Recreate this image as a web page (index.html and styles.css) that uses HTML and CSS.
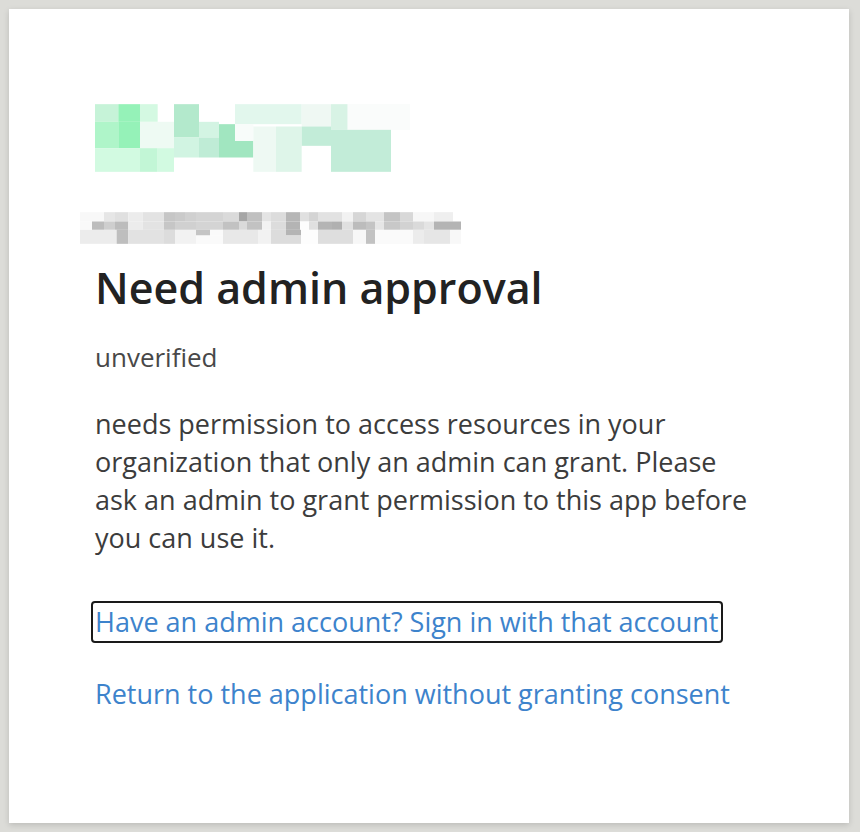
FILE: index.html
```html
<!DOCTYPE html>
<html lang="en">
<head>
    <meta charset="UTF-8">
    <meta name="viewport" content="width=device-width, initial-scale=1.0">
    <title>Need admin approval</title>
    <link rel="stylesheet" href="styles.css">
</head>
<body>
    <div class="card">
        <!-- Blurred app logo -->
        <svg class="app-logo" width="315" height="68" viewBox="75 45 945 203">
            <rect x="75" y="45" width="70" height="53" fill="#c6f3d8"/>
            <rect x="145" y="45" width="65" height="53" fill="#95f2b8"/>
            <rect x="210" y="45" width="53" height="53" fill="#d4f9e2"/>
            <rect x="75" y="98" width="70" height="79" fill="#aff5c9"/>
            <rect x="145" y="98" width="65" height="79" fill="#95f2b8"/>
            <rect x="210" y="98" width="102" height="79" fill="#eefaf3"/>
            <rect x="75" y="177" width="135" height="71" fill="#d2fae1"/>
            <rect x="210" y="177" width="53" height="71" fill="#c2f6d6"/>
            <rect x="263" y="177" width="49" height="71" fill="#d2fae1"/>
            <rect x="312" y="45" width="75" height="100" fill="#b3e9cc"/>
            <rect x="387" y="98" width="60" height="47" fill="#d3f4e3"/>
            <rect x="312" y="145" width="75" height="60" fill="#d1f4e2"/>
            <rect x="387" y="145" width="60" height="60" fill="#bfecd6"/>
            <rect x="447" y="105" width="48" height="100" fill="#a1e6c0"/>
            <rect x="495" y="155" width="55" height="50" fill="#a1e6c0"/>
            <rect x="495" y="45" width="200" height="60" fill="#e2f7ed"/>
            <rect x="495" y="105" width="55" height="50" fill="#f8fcfa"/>
            <rect x="550" y="112" width="68" height="136" fill="#eef9f3"/>
            <rect x="618" y="112" width="77" height="136" fill="#def5e9"/>
            <rect x="695" y="45" width="88" height="67" fill="#eff8f3"/>
            <rect x="695" y="112" width="88" height="58" fill="#c2ecd8"/>
            <rect x="783" y="45" width="50" height="77" fill="#d8f3e5"/>
            <rect x="833" y="45" width="187" height="77" fill="#fafcfb"/>
            <rect x="783" y="122" width="180" height="126" fill="#c2ecd8"/>
        </svg>

        <!-- Blurred publisher / tenant line -->
        <svg class="tenant" width="381" height="32" viewBox="30 370 1143 95">
            <g>
                <rect x="30" y="370" width="72" height="28" fill="#f8f8f8"/>
                <rect x="102" y="370" width="33" height="28" fill="#e6e6e6"/>
                <rect x="135" y="370" width="40" height="28" fill="#e0e0e0"/>
                <rect x="175" y="370" width="43" height="28" fill="#ececec"/>
                <rect x="218" y="370" width="64" height="28" fill="#e3e3e3"/>
                <rect x="282" y="370" width="33" height="28" fill="#c6c6c6"/>
                <rect x="315" y="370" width="30" height="28" fill="#cacaca"/>
                <rect x="345" y="370" width="33" height="28" fill="#d0d0d0"/>
                <rect x="378" y="370" width="81" height="28" fill="#d4d4d4"/>
                <rect x="459" y="370" width="48" height="28" fill="#dadada"/>
                <rect x="507" y="370" width="24" height="28" fill="#a6a6a6"/>
                <rect x="531" y="370" width="45" height="28" fill="#c0c0c0"/>
                <rect x="576" y="370" width="27" height="28" fill="#e4e4e4"/>
                <rect x="603" y="370" width="45" height="28" fill="#dcdcdc"/>
                <rect x="648" y="370" width="42" height="28" fill="#b6b6b6"/>
                <rect x="690" y="370" width="27" height="28" fill="#e0e0e0"/>
                <rect x="717" y="370" width="27" height="28" fill="#d4d4d4"/>
                <rect x="744" y="370" width="72" height="28" fill="#e2e2e2"/>
                <rect x="816" y="370" width="33" height="28" fill="#f2f2f2"/>
                <rect x="849" y="370" width="39" height="28" fill="#d6d6d6"/>
                <rect x="888" y="370" width="54" height="28" fill="#e4e4e4"/>
                <rect x="942" y="370" width="48" height="28" fill="#c4c4c4"/>
                <rect x="990" y="370" width="39" height="28" fill="#d8d8d8"/>
                <rect x="1029" y="370" width="63" height="28" fill="#f7f7f7"/>
                <rect x="1092" y="370" width="57" height="28" fill="#efefef"/>
            </g>
            <g>
                <rect x="30" y="398" width="36" height="25" fill="#f9f9f9"/>
                <rect x="66" y="398" width="36" height="25" fill="#bcbcbc"/>
                <rect x="102" y="398" width="33" height="25" fill="#cecece"/>
                <rect x="135" y="398" width="40" height="25" fill="#bcbcbc"/>
                <rect x="175" y="398" width="43" height="25" fill="#ececec"/>
                <rect x="218" y="398" width="64" height="25" fill="#e3e3e3"/>
                <rect x="282" y="398" width="33" height="25" fill="#c6c6c6"/>
                <rect x="315" y="398" width="63" height="25" fill="#d0d0d0"/>
                <rect x="378" y="398" width="81" height="25" fill="#d4d4d4"/>
                <rect x="459" y="398" width="48" height="25" fill="#c2c2c2"/>
                <rect x="507" y="398" width="24" height="25" fill="#dadada"/>
                <rect x="531" y="398" width="45" height="25" fill="#c2c2c2"/>
                <rect x="576" y="398" width="27" height="25" fill="#f2f2f2"/>
                <rect x="603" y="398" width="45" height="25" fill="#dcdcdc"/>
                <rect x="648" y="398" width="42" height="25" fill="#b4b4b4"/>
                <rect x="690" y="398" width="27" height="25" fill="#fdfdfd"/>
                <rect x="717" y="398" width="27" height="25" fill="#e0e0e0"/>
                <rect x="744" y="398" width="42" height="25" fill="#b4b4b4"/>
                <rect x="786" y="398" width="30" height="25" fill="#b0b0b0"/>
                <rect x="816" y="398" width="33" height="25" fill="#e0e0e0"/>
                <rect x="849" y="398" width="39" height="25" fill="#bcbcbc"/>
                <rect x="888" y="398" width="27" height="25" fill="#c4c4c4"/>
                <rect x="915" y="398" width="27" height="25" fill="#e6e6e6"/>
                <rect x="942" y="398" width="48" height="25" fill="#c8c8c8"/>
                <rect x="990" y="398" width="39" height="25" fill="#d2d2d2"/>
                <rect x="1029" y="398" width="33" height="25" fill="#dadada"/>
                <rect x="1062" y="398" width="30" height="25" fill="#e4e4e4"/>
                <rect x="1092" y="398" width="81" height="25" fill="#b4b4b4"/>
            </g>
            <g>
                <rect x="30" y="423" width="110" height="42" fill="#ececec"/>
                <rect x="140" y="423" width="35" height="42" fill="#bebebe"/>
                <rect x="175" y="423" width="107" height="42" fill="#e2e2e2"/>
                <rect x="282" y="423" width="33" height="42" fill="#dcdcdc"/>
                <rect x="315" y="423" width="63" height="42" fill="#f2f2f2"/>
                <rect x="378" y="423" width="42" height="17" fill="#c4c4c4"/>
                <rect x="378" y="440" width="81" height="25" fill="#fafafa"/>
                <rect x="420" y="423" width="39" height="17" fill="#fafafa"/>
                <rect x="459" y="423" width="105" height="42" fill="#e8e8e8"/>
                <rect x="564" y="423" width="39" height="42" fill="#f2f2f2"/>
                <rect x="603" y="423" width="45" height="42" fill="#dcdcdc"/>
                <rect x="648" y="423" width="45" height="17" fill="#b4b4b4"/>
                <rect x="648" y="440" width="45" height="25" fill="#dcdcdc"/>
                <rect x="693" y="423" width="51" height="42" fill="#fdfdfd"/>
                <rect x="744" y="423" width="105" height="42" fill="#dedede"/>
                <rect x="849" y="423" width="39" height="42" fill="#f7f7f7"/>
                <rect x="888" y="423" width="27" height="42" fill="#c2c2c2"/>
                <rect x="915" y="423" width="114" height="42" fill="#fafafa"/>
                <rect x="1029" y="423" width="33" height="42" fill="#ececec"/>
                <rect x="1062" y="423" width="78" height="42" fill="#e6e6e6"/>
                <rect x="1140" y="423" width="33" height="42" fill="#f8f8f8"/>
            </g>
        </svg>

        <h1>Need admin approval</h1>
        <p class="status">unverified</p>
        <p class="message">needs permission to access resources in your organization that only an admin can grant. Please ask an admin to grant permission to this app before you can use it.</p>

        <div class="links">
            <a href="#" class="link focused">Have an admin account? Sign in with that account</a>
            <a href="#" class="link">Return to the application without granting consent</a>
        </div>
    </div>
</body>
</html>
```

FILE: styles.css
```css
body {
    margin: 0;
    padding: 9px 11px 9px 9px;
    background-color: #dcdcd8;
    font-family: "Open Sans", "Noto Sans", sans-serif;
}

.card {
    box-sizing: border-box;
    width: 840px;
    height: 814px;
    padding: 95px 86px 0 86px;
    background-color: #ffffff;
    box-shadow: 0 2px 6px rgba(0, 0, 0, 0.15);
}

.app-logo {
    display: block;
}

.tenant {
    display: block;
    margin: 40px 0 0 -15px;
}

h1 {
    margin: 18px 0 0 0;
    font-size: 43px;
    line-height: 52px;
    font-weight: 600;
    color: #222222;
}

.status {
    margin: 26px 0 0 0;
    font-size: 26px;
    line-height: 34px;
    color: #484848;
}

.message {
    margin: 31px 0 0 0;
    width: 665px;
    font-size: 27px;
    line-height: 38px;
    color: #3c3c3c;
}

.links {
    display: flex;
    flex-direction: column;
    align-items: flex-start;
    gap: 30px;
    margin-top: 44px;
}

.link {
    margin-left: -4px;
    padding: 3px 3px 3px 2px;
    border: 2px solid transparent;
    border-radius: 4px;
    font-size: 27px;
    line-height: 32px;
    color: #3d83cc;
    text-decoration: none;
}

.link.focused {
    border-color: #1a1a1a;
}
```
